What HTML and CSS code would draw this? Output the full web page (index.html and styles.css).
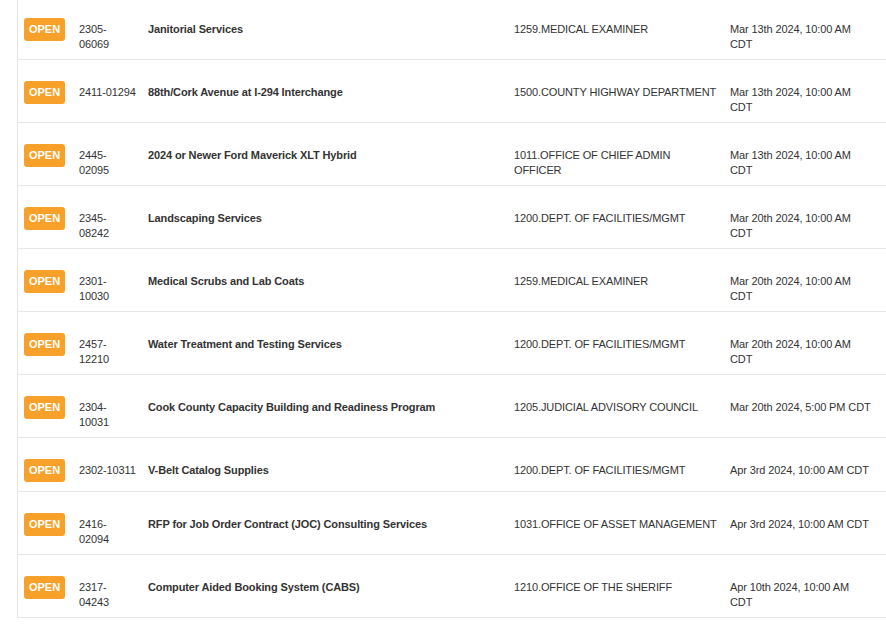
FILE: index.html
```html
<!DOCTYPE html>
<html>
<head>
<meta charset="utf-8">
<link rel="stylesheet" href="styles.css">
</head>
<body>
<div class="table">
  <div class="row">
    <div class="c-status"><span class="badge">OPEN</span></div>
    <div class="c-id">2305-06069</div>
    <div class="c-title">Janitorial Services</div>
    <div class="c-dept">1259.MEDICAL EXAMINER</div>
    <div class="c-date">Mar 13th 2024, 10:00 AM CDT</div>
  </div>
  <div class="row">
    <div class="c-status"><span class="badge">OPEN</span></div>
    <div class="c-id nowrap">2411-01294</div>
    <div class="c-title">88th/Cork Avenue at I-294 Interchange</div>
    <div class="c-dept">1500.COUNTY HIGHWAY DEPARTMENT</div>
    <div class="c-date">Mar 13th 2024, 10:00 AM CDT</div>
  </div>
  <div class="row">
    <div class="c-status"><span class="badge">OPEN</span></div>
    <div class="c-id">2445-02095</div>
    <div class="c-title">2024 or Newer Ford Maverick XLT Hybrid</div>
    <div class="c-dept">1011.OFFICE OF CHIEF ADMIN OFFICER</div>
    <div class="c-date">Mar 13th 2024, 10:00 AM CDT</div>
  </div>
  <div class="row">
    <div class="c-status"><span class="badge">OPEN</span></div>
    <div class="c-id">2345-08242</div>
    <div class="c-title">Landscaping Services</div>
    <div class="c-dept">1200.DEPT. OF FACILITIES/MGMT</div>
    <div class="c-date">Mar 20th 2024, 10:00 AM CDT</div>
  </div>
  <div class="row">
    <div class="c-status"><span class="badge">OPEN</span></div>
    <div class="c-id">2301-10030</div>
    <div class="c-title">Medical Scrubs and Lab Coats</div>
    <div class="c-dept">1259.MEDICAL EXAMINER</div>
    <div class="c-date">Mar 20th 2024, 10:00 AM CDT</div>
  </div>
  <div class="row">
    <div class="c-status"><span class="badge">OPEN</span></div>
    <div class="c-id">2457-12210</div>
    <div class="c-title">Water Treatment and Testing Services</div>
    <div class="c-dept">1200.DEPT. OF FACILITIES/MGMT</div>
    <div class="c-date">Mar 20th 2024, 10:00 AM CDT</div>
  </div>
  <div class="row">
    <div class="c-status"><span class="badge">OPEN</span></div>
    <div class="c-id">2304-10031</div>
    <div class="c-title">Cook County Capacity Building and Readiness Program</div>
    <div class="c-dept">1205.JUDICIAL ADVISORY COUNCIL</div>
    <div class="c-date">Mar 20th 2024, 5:00 PM CDT</div>
  </div>
  <div class="row">
    <div class="c-status"><span class="badge">OPEN</span></div>
    <div class="c-id nowrap">2302-10311</div>
    <div class="c-title">V-Belt Catalog Supplies</div>
    <div class="c-dept">1200.DEPT. OF FACILITIES/MGMT</div>
    <div class="c-date">Apr 3rd 2024, 10:00 AM CDT</div>
  </div>
  <div class="row">
    <div class="c-status"><span class="badge">OPEN</span></div>
    <div class="c-id">2416-02094</div>
    <div class="c-title">RFP for Job Order Contract (JOC) Consulting Services</div>
    <div class="c-dept">1031.OFFICE OF ASSET MANAGEMENT</div>
    <div class="c-date">Apr 3rd 2024, 10:00 AM CDT</div>
  </div>
  <div class="row">
    <div class="c-status"><span class="badge">OPEN</span></div>
    <div class="c-id">2317-04243</div>
    <div class="c-title">Computer Aided Booking System (CABS)</div>
    <div class="c-dept">1210.OFFICE OF THE SHERIFF</div>
    <div class="c-date">Apr 10th 2024, 10:00 AM CDT</div>
  </div>
</div>
</body>
</html>
```

FILE: styles.css
```css
html, body {
  margin: 0;
  padding: 0;
  background: #ffffff;
  overflow: hidden;
}

body {
  font-family: "Liberation Sans", Arial, sans-serif;
  font-size: 11px;
  line-height: 15px;
  color: #333333;
}

.table {
  margin-left: 17px;
  margin-top: -3px;
  border-left: 1px solid #e6e6e6;
}

.row {
  display: grid;
  grid-template-columns: 61px 69px 366px 216px 1fr;
  align-items: start;
  padding-top: 21px;
  padding-bottom: 7.5px;
  border-bottom: 1px solid #e6e6e6;
}

.c-status {
  padding-left: 6px;
}

.badge {
  display: block;
  width: 41px;
  height: 23px;
  margin-bottom: 1.5px;
  line-height: 23px;
  text-align: center;
  background: #f7a12a;
  color: #ffffff;
  font-weight: bold;
  border-radius: 3px;
}

.c-id,
.c-title,
.c-dept,
.c-date {
  margin-top: 3.5px;
  letter-spacing: -0.12px;
}

.c-id {
  max-width: 57px;
}

.c-id.nowrap {
  white-space: nowrap;
}

.c-title {
  font-weight: bold;
  padding-right: 6px;
}

.c-dept {
  max-width: 204px;
}

.c-date {
  max-width: 142px;
}
```
